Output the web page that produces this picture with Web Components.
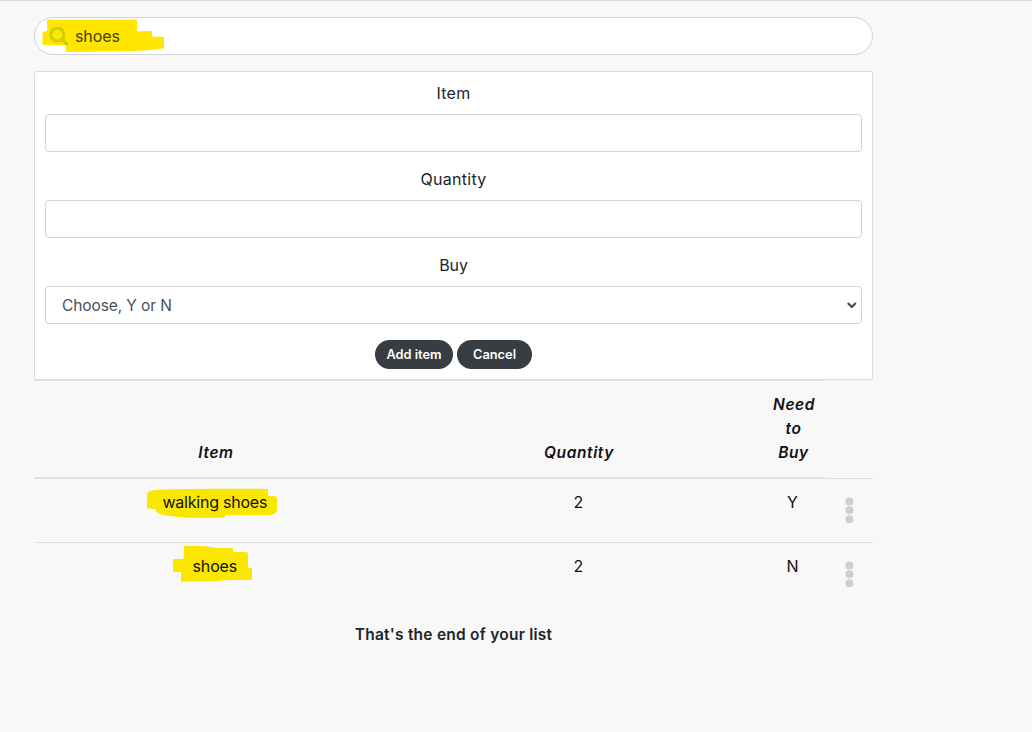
<!DOCTYPE html>
<html lang="en">
<head>
<meta charset="utf-8">
<title>Item list</title>
<style>
html,body{margin:0;height:100%}
body{background:#f8f8f8;font:16px/24px Inter,"Liberation Sans",sans-serif;color:#212529;overflow:hidden}
</style>
</head>
<body>
<shop-page>
<search-bar>shoes</search-bar>
<item-form>
<form-field label="Item"></form-field>
<form-field label="Quantity"></form-field>
<form-field label="Buy" select>Choose, Y or N</form-field>
<pill-button slot="actions" style="width:78px">Add item</pill-button>
<pill-button slot="actions" style="width:75px">Cancel</pill-button>
</item-form>
<list-head></list-head>
<list-row><mark-text slot="item" shape="wide">walking shoes</mark-text><span slot="qty">2</span><span slot="buy">Y</span></list-row>
<list-row><mark-text slot="item" shape="small">shoes</mark-text><span slot="qty">2</span><span slot="buy">N</span></list-row>
</shop-page>
<script>
const define=(name,html)=>customElements.define(name,class extends HTMLElement{
  constructor(){super();this.attachShadow({mode:'open'})}
  connectedCallback(){
    this.shadowRoot.innerHTML=typeof html==='function'?html(this):html;
  }
});
define('shop-page',`<style>
:host{display:block;border-top:1px solid #dcdcdf;padding:16px 0 0 34px;box-sizing:border-box;height:100%}
main{width:839px;display:flex;flex-direction:column}
p{margin:17px 0 0;text-align:center;font-weight:600;font-size:15.500px;letter-spacing:.24px}
</style><main><slot></slot><p>That's the end of your list</p></main>`);
define('search-bar',`<style>
:host{display:flex;align-items:center;position:relative;height:38px;box-sizing:border-box;border:1px solid #d0d3d9;border-radius:19px;background:#fff;padding-left:14px;margin-bottom:16px;color:#3c4208}
.ink{position:absolute;left:7px;top:1px}
.glass{position:relative;flex:none;margin-right:7px}
span{position:relative;letter-spacing:-.1px}
</style>
<svg class="ink" width="124" height="36" viewBox="42 19 124 36"><path fill="#ffe500" d="M47 19.500Q90 20 137 19.500V31.200L152 31V36.500L164 37V48.500Q146 51 120 51.300L66 52V45H42.500V32L47 31Z"/></svg>
<svg class="glass" width="19" height="19" viewBox="0 0 19 19" fill="none" stroke="#cbd000"><circle cx="8.300" cy="7.500" r="6.500" stroke-width="3"/><path d="M12.700 12L18.400 17.700" stroke-width="3.600"/></svg>
<span><slot></slot></span>`);
define('item-form',`<style>
:host{display:block;box-sizing:border-box;height:309px;border:1px solid #dcdce0;border-radius:2px;background:#fff;padding:9px 10px 10px}
.fields{display:grid;gap:15px}
.actions{display:flex;justify-content:center;gap:4px;margin-top:16px}
</style><div class="fields"><slot></slot></div><div class="actions"><slot name="actions"></slot></div>`);
define('form-field',e=>`<style>
:host{display:block}
label{display:block;text-align:center;margin-bottom:9px;letter-spacing:${{Item:.2,Quantity:.3,Buy:-.1}[e.getAttribute('label')]}px}
.box{height:38px;box-sizing:border-box;border:1px solid #ced4da;border-radius:4px;display:flex;align-items:center;justify-content:space-between;padding:0 4px 0 16px;color:#495057;background:#fff}
.text{font-size:15.500px;letter-spacing:-.1px;padding-top:1px}
</style><label>${e.getAttribute('label')}</label><div class="box"><span class="text"><slot></slot></span>${e.hasAttribute('select')?'<svg width="11" height="8" viewBox="0 0 11 8" fill="none" stroke="#454b51" stroke-width="2.200"><path d="M1.800 2L5.800 6L9.800 2"/></svg>':''}</div>`);
define('pill-button',`<style>
:host{display:flex;align-items:center;justify-content:center;height:29px;border-radius:15px;background:#373d42;color:#fff;font-size:12.800px;font-weight:600;line-height:20px;white-space:nowrap}
</style><slot></slot>`);
define('list-head',`<style>
:host{display:grid;grid-template-columns:363px 363px 65px;align-items:end;text-align:center;width:791px;box-sizing:border-box;height:99px;padding:12px 0;border-top:1px solid #dee2e6;border-bottom:2px solid #dee2e6;font-weight:600;font-style:italic;font-size:15.500px;letter-spacing:.62px;color:#111}
div{padding-left:1px}
div:last-child{padding:0 11px 0 13px}
</style><div>Item</div><div>Quantity</div><div>Need to Buy</div>`);
define('list-row',`<style>
:host{display:grid;grid-template-columns:363px 363px 65px 48px;text-align:center;height:64px;margin-top:-1px;box-sizing:border-box;border-top:1px solid #dedfe4;padding-top:11px;color:#111}
:host(:nth-of-type(n+2)){margin-top:0}
svg{margin:7px 0 0 20px}
</style><div><slot name="item"></slot></div><div><slot name="qty"></slot></div><div><slot name="buy"></slot></div>
<svg width="9" height="27" viewBox="0 0 9 27" fill="#cdced3"><circle cx="4.400" cy="4.500" r="4"/><circle cx="4.400" cy="13.300" r="4"/><circle cx="4.400" cy="22.200" r="4"/></svg>`);
const inks={
wide:['M155 490Q185 488 268 489V496H274Q277 496 277 499V510Q277 514 270 515H225V517.500Q185 519 163 515Q156 513 156 509.500L147 508V494Q147 491 155 490Z',147,488],
small:['M184 546Q202 545 217 548H233V552H245Q248 552 248 554V568H252V580Q230 579 214 581.500H181V572H173V559H183.500Z',173,545]};
define('mark-text',e=>{const k=e.getAttribute('shape'),[d,x,y]=inks[k];return `<style>
:host{display:inline-block;position:relative;letter-spacing:${k==='wide'?-.23:-.1}px}
svg{position:absolute;top:${k==='wide'?-2:-9}px;left:50%;margin-left:${x-215.5}px}
span{position:relative;left:-.7px}
</style><svg width="131" height="38" viewBox="${x} ${y} 131 38"><path fill="#fae600" d="${d}"/></svg><span><slot></slot></span>`});
</script>
</body>
</html>
